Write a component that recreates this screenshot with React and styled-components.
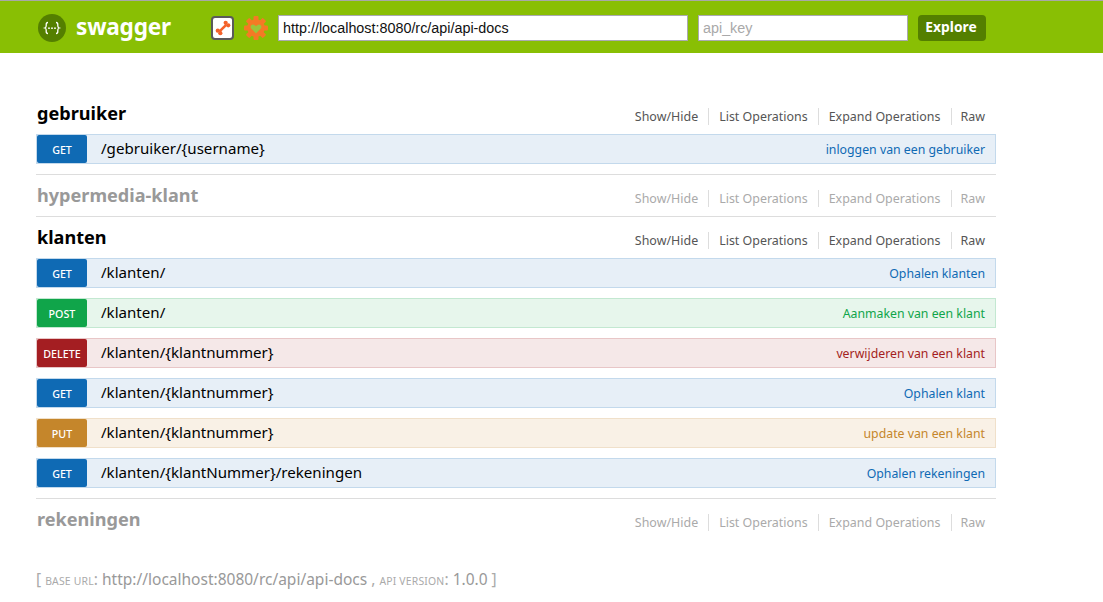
import React from "react";
import styled, { createGlobalStyle } from "styled-components";

const Global = createGlobalStyle`
  html, body { margin: 0; padding: 0; background: #fff; }
  body { font-family: "Noto Sans", "Open Sans", sans-serif; }
  * { box-sizing: border-box; }
`;

const Header = styled.header`
  height: 53px;
  background: #89bf04;
  border-top: 1px solid #a8a8a8;
  padding: 14px 117px 0 38px;
  display: flex;
  align-items: flex-start;
`;
const Brand = styled.div`
  display: flex;
  align-items: center;
  height: 26px;
  width: 173px;
  gap: 10px;
`;
const BrandName = styled.span`
  color: #fff;
  font-size: 22.6px;
  font-weight: 700;
  line-height: 26px;
  letter-spacing: -0.2px;
  margin-top: -2px;
`;
const Icons = styled.div`
  display: flex;
  align-items: center;
  height: 26px;
  width: 67px;
  gap: 10px;
`;
const IconBtn = styled.div`
  width: 23px;
  height: 24px;
  background: #fff;
  border: 2px solid #5a5a5a;
  border-radius: 4px;
  display: flex;
  align-items: center;
  justify-content: center;
`;
const Field = styled.input`
  width: ${(p) => p.$w}px;
  height: 26px;
  margin-right: 10px;
  border: 1px solid #aaaab0;
  background: #fff;
  padding: 0 4px;
  font-family: "Liberation Sans", Arial, sans-serif;
  font-size: 14.35px;
  color: #111;
  outline: none;
  &::placeholder { color: #a9a9a9; opacity: 1; }
`;
const Explore = styled.button`
  width: 68px;
  height: 26px;
  border: none;
  border-radius: 4px;
  background: #547f00;
  color: #fff;
  font-family: "Noto Sans", sans-serif;
  font-weight: 700;
  font-size: 13.8px;
  line-height: 24px;
  padding: 0 2px 2px 0;
`;
const Main = styled.main`
  width: 960px;
  margin: 40px 0 0 36px;
`;
const Section = styled.section`
  border-bottom: ${(p) => (p.$last ? "none" : "1px solid #ddd")};
`;
const Heading = styled.div`
  height: 41px;
  display: flex;
  align-items: flex-start;
  justify-content: space-between;
`;
const Title = styled.h2`
  margin: 7px 0 0 1px;
  font-size: 18.1px;
  line-height: 26px;
  font-weight: 700;
  color: ${(p) => (p.$muted ? "#999" : "#000")};
`;
const Links = styled.ul`
  list-style: none;
  margin: 15px 0 0;
  padding: 0;
  display: flex;
  color: ${(p) => (p.$muted ? "#aaa" : "#555")};
  font-size: 12.45px;
`;
const LinkItem = styled.li`
  height: 17px;
  line-height: 17px;
  padding: 0 10px;
  border-right: 1px solid #ddd;
  &:last-child {
    border-right: none;
    padding: 0 11px 0 9px;
  }
`;
const Rows = styled.div`
  display: flex;
  flex-direction: column;
  gap: 10px;
  padding: 0 0 10px;
`;
const Row = styled.div`
  height: 30px;
  display: flex;
  align-items: center;
  background: ${(p) => p.$c.bg};
  border: 1px solid ${(p) => p.$c.border};
`;
const Method = styled.span`
  width: 50px;
  height: 28px;
  flex: none;
  border-radius: 2px;
  background: ${(p) => p.$c.badge};
  color: #fff;
  font-size: 10.7px;
  line-height: 30px;
  font-weight: 500;
  text-align: center;
`;
const Path = styled.span`
  margin-left: 14px;
  margin-top: -3px;
  font-size: 15.1px;
  color: #000;
  flex: 1;
`;
const Summary = styled.span`
  margin-right: 10px;
  font-size: 12.3px;
  color: ${(p) => p.$c.text};
`;
const Footer = styled.footer`
  margin: 28px 0 0 36px;
  font-size: 15.5px;
  line-height: 22px;
  color: #aaa;
  white-space: nowrap;
`;
const Small = styled.span`
  font-size: 10.4px;
  text-transform: uppercase;
  letter-spacing: 0.2px;
`;
const Val = styled.span`
  color: #999;
`;

const palette = {
  GET: { bg: "#e7eff7", border: "#c3d9ec", badge: "#0f6ab4", text: "#0f6ab4" },
  POST: { bg: "#e7f6ec", border: "#c3e8d1", badge: "#10a54a", text: "#10a54a" },
  DELETE: { bg: "#f5e8e8", border: "#e8c6c7", badge: "#a41e22", text: "#a41e22" },
  PUT: { bg: "#f9f1e6", border: "#f0e0ca", badge: "#c5862b", text: "#c5862b" },
};

const groups = [
  { name: "gebruiker", rows: [["GET", "/gebruiker/{username}", "inloggen van een gebruiker"]] },
  { name: "hypermedia-klant", muted: true, rows: [] },
  {
    name: "klanten",
    rows: [
      ["GET", "/klanten/", "Ophalen klanten"],
      ["POST", "/klanten/", "Aanmaken van een klant"],
      ["DELETE", "/klanten/{klantnummer}", "verwijderen van een klant"],
      ["GET", "/klanten/{klantnummer}", "Ophalen klant"],
      ["PUT", "/klanten/{klantnummer}", "update van een klant"],
      ["GET", "/klanten/{klantNummer}/rekeningen", "Ophalen rekeningen"],
    ],
  },
  { name: "rekeningen", muted: true, last: true, rows: [] },
];

const Logo = () => (
  <svg width="28" height="28" viewBox="0 0 28 28">
    <circle cx="14" cy="14" r="14" fill="#547f00" />
    <g fill="none" stroke="#fff" strokeWidth="1.3">
      <path d="M10 8.5c-1.6 0-1.8.8-1.8 2v1.6c0 1-.5 1.6-1.4 1.9.9.3 1.4.9 1.4 1.9v1.6c0 1.2.2 2 1.8 2" />
      <path d="M18 8.5c1.6 0 1.8.8 1.8 2v1.6c0 1 .5 1.6 1.4 1.9-.9.3-1.4.9-1.4 1.9v1.6c0 1.2-.2 2-1.8 2" />
    </g>
    <g fill="#fff">
      <circle cx="11" cy="14.2" r=".9" />
      <circle cx="14" cy="14.2" r=".9" />
      <circle cx="17" cy="14.2" r=".9" />
    </g>
  </svg>
);
const Bone = () => (
  <svg width="16" height="16" viewBox="0 0 15 15">
    <g fill="#f4622a">
      <path d="M3.4 9.9 9.9 3.4l1.7 1.7-6.5 6.5z" />
      <circle cx="10" cy="2.6" r="2" />
      <circle cx="12.4" cy="5" r="2" />
      <circle cx="2.6" cy="10" r="2" />
      <circle cx="5" cy="12.4" r="2" />
    </g>
  </svg>
);
const Gear = () => {
  const teeth = [0, 45, 90, 135, 180, 225, 270, 315];
  return (
    <svg width="24" height="24" viewBox="0 0 24 24">
      <g fill="#f47a25">
        {teeth.map((a) => (
          <rect key={a} x="9.5" y="0" width="5" height="6" rx="1" transform={`rotate(${a} 12 12)`} />
        ))}
        <circle cx="12" cy="12" r="8.8" />
      </g>
      <path d="M12 17.5 7.2 12.6c-2-2.4 1-5.4 3.3-3.6l1.5 1.3 1.5-1.3c2.3-1.8 5.3 1.2 3.3 3.6z" fill="#9cc43a" />
    </svg>
  );
};

export default function App() {
  return (
    <>
      <Global />
      <Header>
        <Brand>
          <Logo />
          <BrandName>swagger</BrandName>
        </Brand>
        <Icons>
          <IconBtn><Bone /></IconBtn>
          <Gear />
        </Icons>
        <Field $w={410} defaultValue="http://localhost:8080/rc/api/api-docs" />
        <Field $w={210} placeholder="api_key" />
        <Explore>Explore</Explore>
      </Header>
      <Main>
        {groups.map((g) => (
          <Section key={g.name} $last={g.last}>
            <Heading>
              <Title $muted={g.muted}>{g.name}</Title>
              <Links $muted={g.muted}>
                <LinkItem>Show/Hide</LinkItem>
                <LinkItem>List Operations</LinkItem>
                <LinkItem>Expand Operations</LinkItem>
                <LinkItem>Raw</LinkItem>
              </Links>
            </Heading>
            {g.rows.length > 0 && (
              <Rows>
                {g.rows.map(([m, p, s], i) => (
                  <Row key={i} $c={palette[m]}>
                    <Method $c={palette[m]}>{m}</Method>
                    <Path>{p}</Path>
                    <Summary $c={palette[m]}>{s}</Summary>
                  </Row>
                ))}
              </Rows>
            )}
          </Section>
        ))}
      </Main>
      <Footer>
        [ <Small>base url</Small>: <Val>http://localhost:8080/rc/api/api-docs</Val> , <Small>api version</Small>: <Val>1.0.0</Val> ]
      </Footer>
    </>
  );
}
